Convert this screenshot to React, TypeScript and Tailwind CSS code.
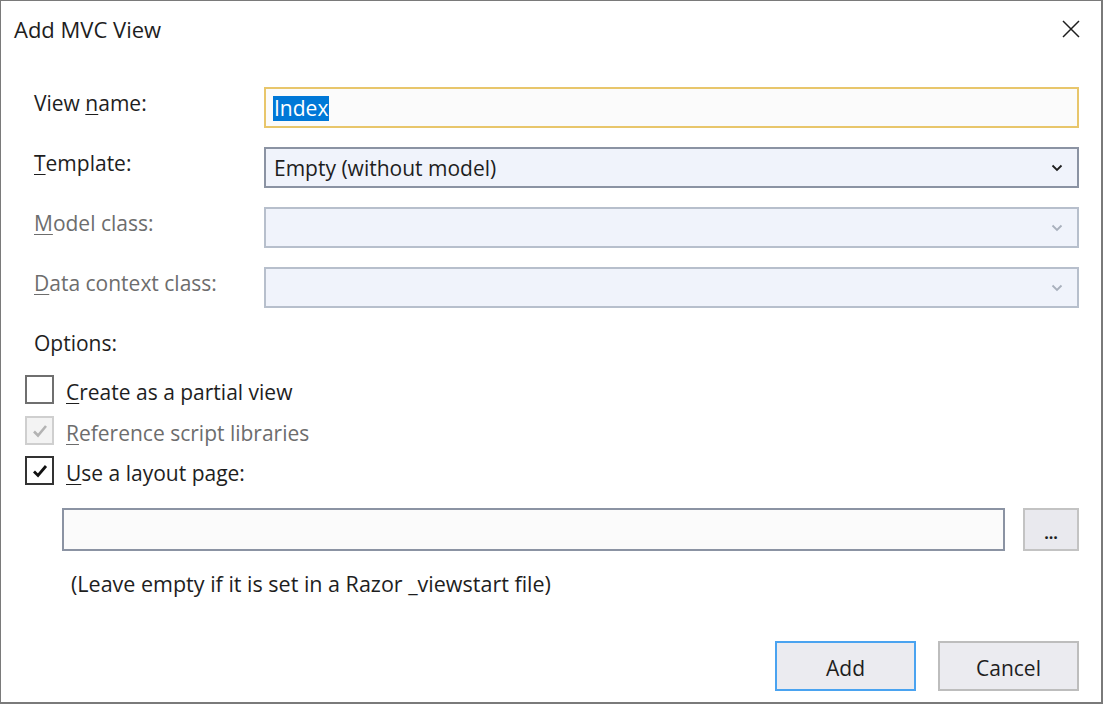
import React from "react";

const Chevron = ({ color }: { color: string }) => (
  <svg width="12" height="8" viewBox="0 0 12 8">
    <path d="M1.5 1.5 L6 6 L10.5 1.5" fill="none" stroke={color} strokeWidth="1.8" />
  </svg>
);

const U = ({ children }: { children: React.ReactNode }) => (
  <span className="underline underline-offset-[3px] decoration-1">{children}</span>
);

export default function App() {
  return (
    <div
      className="w-[1103px] h-[704px] bg-white border-l border-t border-r-2 border-b-2 border-[#7a7a7a] flex flex-col text-[#1e1e1e] text-[21px] leading-[28px]"
      style={{ fontFamily: '"Open Sans", "Noto Sans", sans-serif' }}
    >
      <div className="h-[56px] flex items-center justify-between pl-[13px] pr-[20px]">
        <div className="text-[22px]">Add MVC View</div>
        <svg width="20" height="20" viewBox="0 0 20 20">
          <path d="M2 2 L18 18 M18 2 L2 18" stroke="#1e1e1e" strokeWidth="1.5" />
        </svg>
      </div>

      <div className="flex flex-col pl-[33px] pr-[22px] pt-[30px]">
        <div className="flex items-center h-[41px]">
          <div className="w-[230px] -mt-[10px]">
            View <U>n</U>ame:
          </div>
          <div className="flex-1 h-[41px] border-2 border-[#e8c66b] bg-[#fbfbfb] flex items-center pl-[7px]">
            <span className="bg-[#0078d7] text-white leading-[25px] px-[1px] mt-[1px]">Index</span>
          </div>
        </div>

        <div className="flex items-center h-[41px] mt-[19px]">
          <div className="w-[230px] -mt-[10px]">
            <U>T</U>emplate:
          </div>
          <div className="flex-1 h-[41px] border-2 border-[#8b93a3] bg-[#f0f3fb] flex items-center justify-between pl-[8px] pr-[14px]">
            <span>Empty (without model)</span>
            <Chevron color="#1e1e1e" />
          </div>
        </div>

        <div className="flex items-center h-[41px] mt-[19px]">
          <div className="w-[230px] -mt-[10px] text-[#6d6d6d]">
            <U>M</U>odel class:
          </div>
          <div className="flex-1 h-[41px] border-2 border-[#b7bfcc] bg-[#f0f3fb] flex items-center justify-end pr-[14px]">
            <Chevron color="#a9b0bc" />
          </div>
        </div>

        <div className="flex items-center h-[41px] mt-[19px]">
          <div className="w-[230px] -mt-[10px] text-[#6d6d6d]">
            <U>D</U>ata context class:
          </div>
          <div className="flex-1 h-[41px] border-2 border-[#b7bfcc] bg-[#f0f3fb] flex items-center justify-end pr-[14px]">
            <Chevron color="#a9b0bc" />
          </div>
        </div>

        <div className="mt-[21px] h-[28px]">Options:</div>
      </div>

      <div className="flex flex-col pl-[24px] pr-[22px] mt-[18px]">
        <div className="flex items-center h-[29px]">
          <div className="w-[29px] h-[29px] border-2 border-[#6f6f6f] bg-white" />
          <div className="ml-[12px] mt-[4px]">
            <U>C</U>reate as a partial view
          </div>
        </div>
        <div className="flex items-center h-[29px] mt-[12px] text-[#6d6d6d]">
          <div className="w-[29px] h-[29px] border-2 border-[#cfcfcf] bg-[#f3f3f3] flex items-center justify-center">
            <svg width="16" height="14" viewBox="0 0 16 14">
              <path d="M2 7.5 L6 11.5 L14 2" fill="none" stroke="#b3b3b3" strokeWidth="2.6" />
            </svg>
          </div>
          <div className="ml-[12px] mt-[4px]">
            <U>R</U>eference script libraries
          </div>
        </div>
        <div className="flex items-center h-[29px] mt-[11px]">
          <div className="w-[29px] h-[29px] border-2 border-[#333333] bg-white flex items-center justify-center">
            <svg width="16" height="14" viewBox="0 0 16 14">
              <path d="M2 7.5 L6 11.5 L14 2" fill="none" stroke="#111111" strokeWidth="2.8" />
            </svg>
          </div>
          <div className="ml-[12px] mt-[4px]">
            <U>U</U>se a layout page:
          </div>
        </div>

        <div className="flex items-center mt-[23px] pl-[37px]">
          <div className="flex-1 h-[43px] border-2 border-[#8b93a3] bg-[#fbfbfb]" />
          <div className="ml-[18px] w-[56px] h-[43px] border-2 border-[#c3c3c3] bg-[#e9e9ee] flex items-center justify-center text-[16px] leading-none pt-[6px] font-bold">
            ...
          </div>
        </div>

        <div className="pl-[46px] mt-[19px] text-[21.5px]">(Leave empty if it is set in a Razor _viewstart file)</div>
      </div>

      <div className="flex justify-end pr-[22px] mt-auto mb-[11px] gap-[22px]">
        <div className="w-[141px] h-[50px] border-2 border-[#4aa3f0] bg-[#ebebf0] flex items-center justify-center pt-[3px]">
          Add
        </div>
        <div className="w-[141px] h-[50px] border-2 border-[#bdbdbd] bg-[#ebebf0] flex items-center justify-center pt-[3px]">
          Cancel
        </div>
      </div>
    </div>
  );
}
